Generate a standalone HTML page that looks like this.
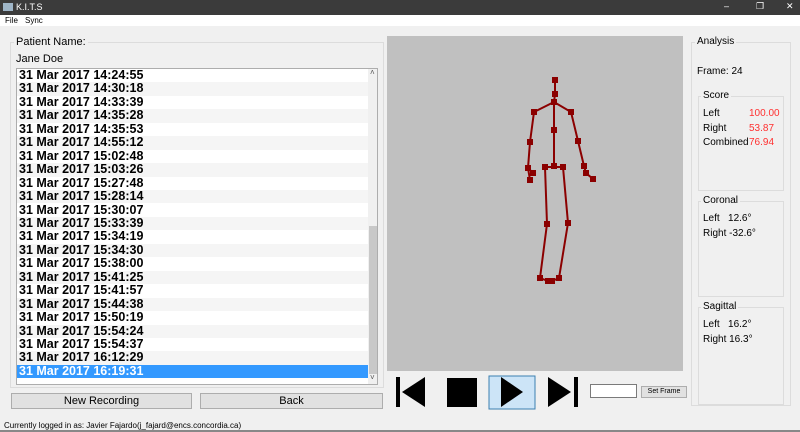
<!DOCTYPE html>
<html><head><meta charset="utf-8"><style>
*{box-sizing:border-box;margin:0;padding:0}
body{width:800px;height:432px;overflow:hidden;background:#f0f0f0;font-family:"Liberation Sans",sans-serif;font-size:11px;color:#000;position:relative}
.abs{position:absolute}
.title{left:0;top:0;width:800px;height:15px;background:#3b3b3b;color:#fff;font-size:9px}
.menu{left:0;top:15px;width:800px;height:11px;background:#fff;font-size:8px}
.grp{border:1px solid #dcdcdc}
.row{position:absolute;left:0;width:351px;height:13.45px;font-weight:bold;font-size:12.5px;line-height:13.4px;padding-left:2px}
.btn{background:#e1e1e1;border:1px solid #adadad;text-align:center;font-size:11px;line-height:14px}
.red{color:#ff3030}
.an{font-size:10px}
</style></head><body>
<div class="abs title"><div class="abs" style="left:3px;top:3px;width:10px;height:8px;background:#9fb6c8"></div><span class="abs" style="left:16px;top:2px">K.I.T.S</span>
<span class="abs" style="left:724px;top:1px">&#8211;</span><span class="abs" style="left:756px;top:1px">&#10064;</span><span class="abs" style="left:786px;top:1px">&#10005;</span></div>
<div class="abs menu"><span class="abs" style="left:5px;top:1px">File</span><span class="abs" style="left:25px;top:1px">Sync</span></div>

<div class="abs grp" style="left:10px;top:42px;width:374px;height:346px"></div>
<div class="abs" style="left:14px;top:36px;background:#f0f0f0;padding:0 2px;font-size:11px">Patient Name:</div>
<div class="abs" style="left:16px;top:53px;font-size:11px">Jane Doe</div>
<div class="abs" style="left:16px;top:68px;width:362px;height:317px;background:#fff;border:1px solid #adadad;overflow:hidden">
<div id="rows"></div>
<div class="abs" style="left:351px;top:0;width:10px;height:315px;background:#f0f0f0"></div>
<div class="abs" style="left:352px;top:157px;width:8px;height:148px;background:#c8c8c8"></div>
<div class="abs" style="left:353px;top:-1px;font-size:8px;color:#555">&#708;</div>
<div class="abs" style="left:353px;top:304px;font-size:8px;color:#555">&#709;</div>
</div>
<div class="abs btn" style="left:11px;top:393px;width:181px;height:16px">New Recording</div>
<div class="abs btn" style="left:200px;top:393px;width:183px;height:16px">Back</div>
<div class="abs" style="left:4px;top:421px;font-size:8px">Currently logged in as: Javier Fajardo(j_fajard@encs.concordia.ca)</div>
<div class="abs" style="left:0;top:430px;width:800px;height:2px;background:#888"></div>

<div class="abs" style="left:387px;top:36px;width:296px;height:335px;background:#c0c0c0"></div>
<svg class="abs" style="left:0;top:0" width="800" height="432">
<g stroke="#8b0000" stroke-width="2" fill="none">
<polyline points="555,80 555,94 554,102 554,130 554,166"/>
<polyline points="534,112 554,102 571,112 578,141 584,166 586,173 593,179"/>
<polyline points="534,112 530,142 528,168 533,173"/>
<polyline points="528,168 530,180"/>
<polyline points="545,167 563,167"/>
<polyline points="545,167 547,224 540,278 548,281 552,281 559,278 568,223 563,167"/>
</g>
<g fill="#8b0000">
<rect x="552" y="77" width="6" height="6"/><rect x="552" y="91" width="6" height="6"/><rect x="551" y="99" width="6" height="6"/><rect x="531" y="109" width="6" height="6"/><rect x="568" y="109" width="6" height="6"/><rect x="551" y="127" width="6" height="6"/><rect x="551" y="163" width="6" height="6"/><rect x="542" y="164" width="6" height="6"/><rect x="560" y="164" width="6" height="6"/><rect x="527" y="139" width="6" height="6"/><rect x="525" y="165" width="6" height="6"/><rect x="530" y="170" width="6" height="6"/><rect x="527" y="177" width="6" height="6"/><rect x="575" y="138" width="6" height="6"/><rect x="581" y="163" width="6" height="6"/><rect x="583" y="170" width="6" height="6"/><rect x="590" y="176" width="6" height="6"/><rect x="544" y="221" width="6" height="6"/><rect x="565" y="220" width="6" height="6"/><rect x="537" y="275" width="6" height="6"/><rect x="556" y="275" width="6" height="6"/><rect x="545" y="278" width="6" height="6"/><rect x="549" y="278" width="6" height="6"/>
</g>
<g fill="#000">
<rect x="396" y="377" width="4" height="30"/><polygon points="425,377 425,407 402,392"/>
<rect x="447" y="378" width="30" height="29"/>
<rect x="489" y="376" width="46" height="33" fill="#cce4f7" stroke="#3c7fb1" stroke-width="1"/>
<polygon points="501,377 501,407 523,392"/>
<polygon points="548,377 548,407 571,392"/><rect x="574" y="377" width="4" height="30"/>
</g>
</svg>
<div class="abs" style="left:590px;top:384px;width:47px;height:14px;background:#fff;border:1px solid #7a7a7a"></div>
<div class="abs btn" style="left:641px;top:386px;width:46px;height:12px;font-size:7px;line-height:10px">Set Frame</div>

<div class="abs grp" style="left:691px;top:42px;width:100px;height:364px"></div>
<div class="abs an" style="left:695px;top:36px;background:#f0f0f0;padding:0 2px">Analysis</div>
<div class="abs an" style="left:697px;top:66px">Frame: 24</div>
<div class="abs grp" style="left:698px;top:96px;width:86px;height:95px"></div>
<div class="abs an" style="left:701px;top:90px;background:#f0f0f0;padding:0 2px">Score</div>
<div class="abs an" style="left:703px;top:107px;line-height:14.5px">Left<br>Right<br>Combined</div>
<div class="abs an red" style="left:749px;top:107px;line-height:14.5px">100.00<br>53.87<br>76.94</div>
<div class="abs grp" style="left:698px;top:201px;width:86px;height:96px"></div>
<div class="abs an" style="left:701px;top:195px;background:#f0f0f0;padding:0 2px">Coronal</div>
<div class="abs an" style="left:703px;top:211px;line-height:15px">Left&nbsp;&nbsp;&nbsp;12.6°<br>Right -32.6°</div>
<div class="abs grp" style="left:698px;top:307px;width:86px;height:98px"></div>
<div class="abs an" style="left:701px;top:301px;background:#f0f0f0;padding:0 2px">Sagittal</div>
<div class="abs an" style="left:703px;top:317px;line-height:15px">Left&nbsp;&nbsp;&nbsp;16.2°<br>Right 16.3°</div>
<script>
var t=["14:24:55","14:30:18","14:33:39","14:35:28","14:35:53","14:55:12","15:02:48","15:03:26","15:27:48","15:28:14","15:30:07","15:33:39","15:34:19","15:34:30","15:38:00","15:41:25","15:41:57","15:44:38","15:50:19","15:54:24","15:54:37","16:12:29","16:19:31"];
var h="";for(var i=0;i<t.length;i++){var bg=i==t.length-1?"background:#3399ff;color:#fff":(i%2?"background:#f5f5f5":"background:#fff");h+='<div class="row" style="top:'+(i*13.45)+'px;'+bg+'">31 Mar 2017 '+t[i]+'</div>';}
document.getElementById("rows").innerHTML=h;
</script>
</body></html>
